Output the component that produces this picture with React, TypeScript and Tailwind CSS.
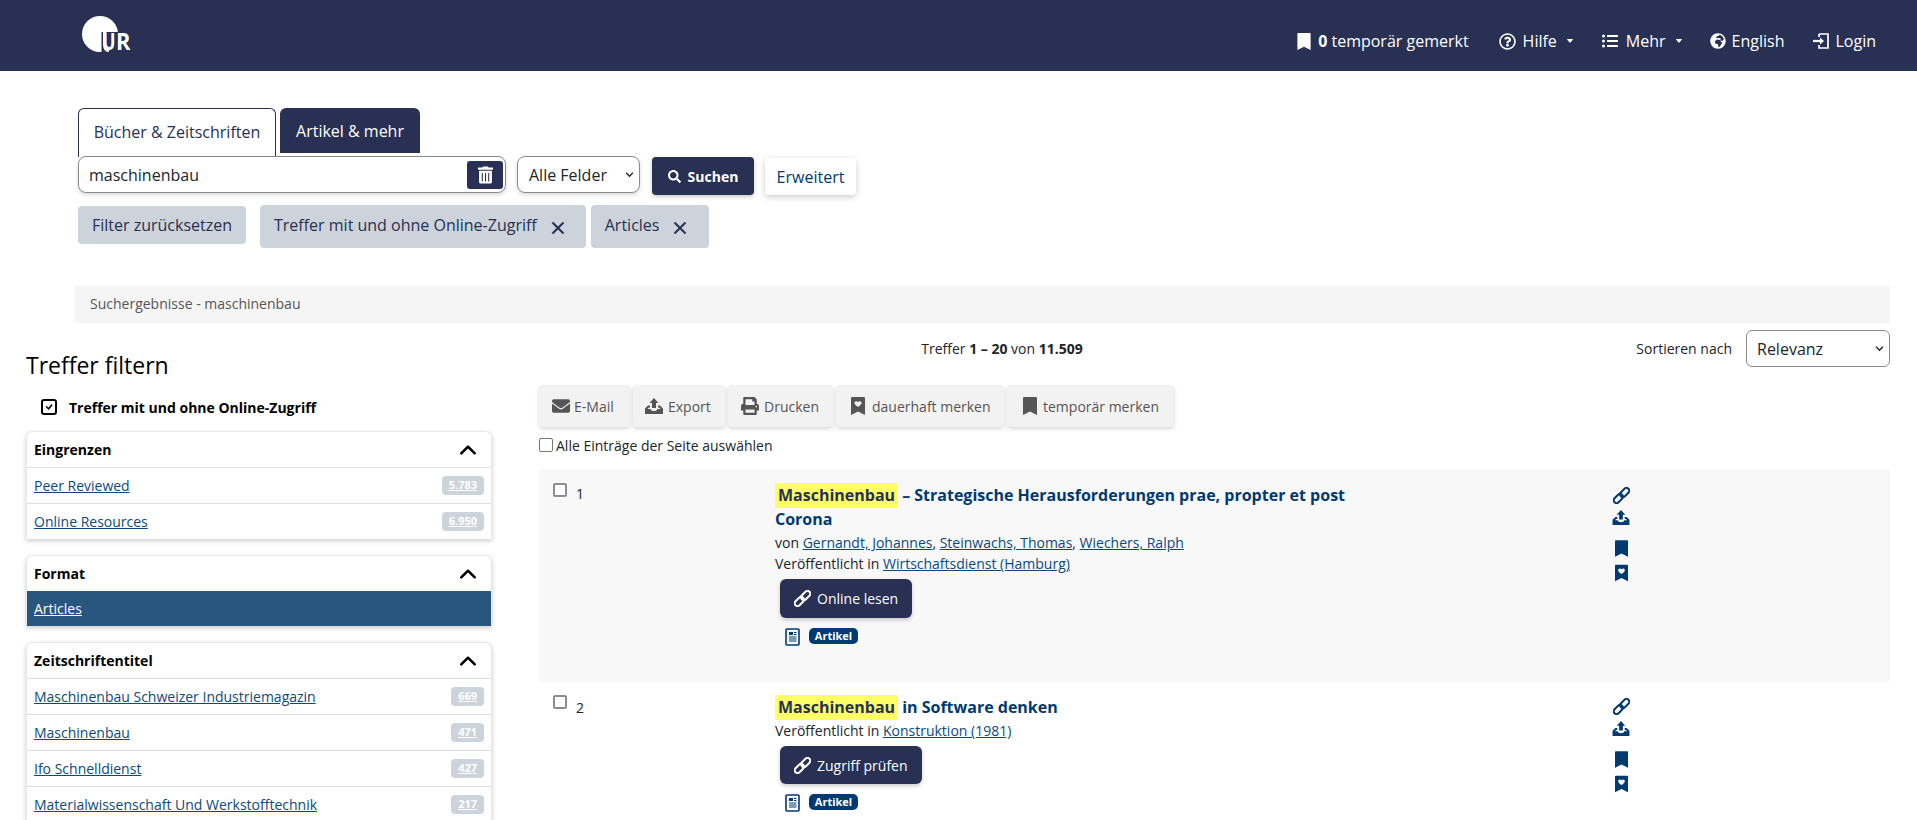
import React from "react";
import { BsChevronUp, BsCaretDownFill, BsCheck, BsX } from "react-icons/bs";
import {
  FaRegQuestionCircle,
  FaListUl,
  FaGlobeAfrica,
  FaEnvelope,
  FaPrint,
  FaTrashAlt,
  FaSearch,
} from "react-icons/fa";

const navy = "bg-[#283053]";

function Logo() {
  return (
    <svg width="50" height="36" viewBox="0 0 50 36" className="block">
      <circle cx="18" cy="18" r="18" fill="#fff" />
      <rect x="19.500" y="16" width="30.500" height="20" fill="#283053" />
      <path d="M21 16h3.500v11.500c0 2 1 3.200 2.500 3.200V36c-4 0-6-3-6-8z" fill="#fff" />
      <g transform="translate(20 34) scale(0.78 1)">
        <text fontSize="23" fontWeight="700" fill="#fff" fontFamily="'Open Sans',sans-serif">U</text>
      </g>
      <g transform="translate(34 34) scale(0.95 1)">
        <text fontSize="23" fontWeight="700" fill="#fff" fontFamily="'Open Sans',sans-serif">R</text>
      </g>
    </svg>
  );
}

function UploadIcon({ className }: { className?: string }) {
  return (
    <svg viewBox="0 0 18 16" className={className} fill="currentColor">
      <path d="M9 0l4.500 5H11v5H7V5H4.500z" />
      <path d="M0 10.500L3 7.500h2v2H3.800L2.500 11H5.500c.5 1.500 1.700 2 3.500 2s3-.5 3.500-2h3L14.200 9.500H13v-2h2l3 3V16H0z" />
    </svg>
  );
}

function LinkIcon({ className }: { className?: string }) {
  return (
    <svg viewBox="0 0 17 17" className={className} fill="none" stroke="currentColor" strokeWidth="2">
      <rect x="0" y="8.700" width="10.600" height="5.600" rx="2.800" transform="rotate(-45 5.300 11.500)" />
      <rect x="6.400" y="2.700" width="10.600" height="5.600" rx="2.800" transform="rotate(-45 11.700 5.500)" />
    </svg>
  );
}

function Bookmark({ className }: { className?: string }) {
  return (
    <svg viewBox="0 0 14 18" className={className} fill="currentColor">
      <path d="M1 0h12a1 1 0 011 1v17l-7-3.500L0 18V1a1 1 0 011-1z" />
    </svg>
  );
}

function BookmarkHeart({ className }: { className?: string }) {
  return (
    <svg viewBox="0 0 14 18" className={className} fill="currentColor">
      <path
        fillRule="evenodd"
        d="M1 0h12a1 1 0 011 1v17l-7-3.500L0 18V1a1 1 0 011-1zM7 5c1.700-1.900 4.400-.4 3.400 1.800-.5 1.100-2.300 2.500-3.400 3.300-1.100-.8-2.900-2.200-3.400-3.300C2.600 4.600 5.300 3.100 7 5z"
      />
    </svg>
  );
}

function LoginIcon({ className }: { className?: string }) {
  return (
    <svg viewBox="0 0 16 16" className={className} fill="none" stroke="currentColor" strokeWidth="1.700">
      <path d="M6 1h9v14H6v-3" />
      <path d="M6 4V1" />
      <path d="M0 8h9" strokeWidth="2.200" />
      <path d="M7 4.500L11 8l-4 3.500z" fill="currentColor" stroke="none" />
    </svg>
  );
}

function DocIcon() {
  return (
    <svg viewBox="0 0 15 18" className="w-[15px] h-[18px] text-[#003a70] shrink-0" fill="none" stroke="currentColor">
      <rect x="1" y="1" width="13" height="16" rx="1" strokeWidth="1.600" />
      <rect x="4" y="4" width="4" height="3" fill="currentColor" stroke="none" />
      <path d="M9 4.500h2.500M9 6.500h2.500M4 9h7.500M4 11h7.500M4 13h7.500" strokeWidth="1" />
    </svg>
  );
}

function Caret({ className }: { className: string }) {
  return <BsCaretDownFill className={`w-[8px] h-[8px] ${className}`} />;
}

function Header() {
  return (
    <header className={`h-[71px] ${navy} flex items-start justify-between pl-[82px] pr-[41px]`}>
      <div className="pt-[16px]">
        <Logo />
      </div>
      <nav className="flex items-center h-[24px] mt-[29px] text-white text-[16px]">
        <Bookmark className="w-[14px] h-[17px]" />
        <span className="ml-[7px]">
          <b>0</b> temporär gemerkt
        </span>
        <FaRegQuestionCircle className="ml-[30px] w-[17px] h-[17px]" />
        <span className="ml-[7px]">Hilfe</span>
        <Caret className="ml-[9px]" />
        <FaListUl className="ml-[28px] w-[16px] h-[16px]" />
        <span className="ml-[8px]">Mehr</span>
        <Caret className="ml-[9px]" />
        <FaGlobeAfrica className="ml-[27px] w-[16px] h-[16px]" />
        <span className="ml-[6px]">English</span>
        <LoginIcon className="ml-[29px] w-[16px] h-[16px]" />
        <span className="ml-[6px]">Login</span>
      </nav>
    </header>
  );
}

function Chip({ children, pad }: { children: React.ReactNode; pad: string }) {
  return (
    <div className={`h-[43px] bg-[#ccd3db] rounded-[4px] flex items-start pl-[14px] ${pad} pt-[8px] text-[16px] text-[#283053] gap-[8px]`}>
      <span>{children}</span>
      <BsX className="w-[26px] h-[26px] mt-[2px] stroke-[0.4]" />
    </div>
  );
}

function SearchArea() {
  return (
    <section className="pl-[78px] pt-[37px]">
      <div className="flex gap-[4px] h-[48px]">
        <div className="w-[198px] h-[49px] pb-[3px] relative z-10 border border-[#283053] border-b-0 rounded-t-[6px] bg-white flex items-center justify-center text-[16px] text-[#283053]">
          Bücher &amp; Zeitschriften
        </div>
        <div className={`w-[140px] h-[48px] ${navy} rounded-t-[6px] border-b-[3px] border-white flex items-center justify-center text-[16px] text-white`}>
          Artikel &amp; mehr
        </div>
      </div>
      <div className="flex items-start">
        <div className="w-[428px] h-[37px] relative z-20 bg-white border border-[#8a8a8a] rounded-[8px] shadow-[0_2px_4px_rgba(0,0,0,0.15)] flex items-center justify-between pl-[10px] pr-[2px] text-[16px] text-[#212529]">
          <span>maschinenbau</span>
          <span className={`w-[36px] h-[28px] ${navy} rounded-[3px] flex items-center justify-center text-white`}>
            <FaTrashAlt className="w-[15px] h-[18px]" />
          </span>
        </div>
        <div className="ml-[11px] w-[123px] h-[37px] bg-white border border-[#8a8a8a] rounded-[8px] shadow-[0_2px_4px_rgba(0,0,0,0.15)] flex items-center justify-between pl-[11px] pr-[5px] text-[16px] text-[#212529]">
          <span>Alle Felder</span>
          <svg width="9" height="9" viewBox="0 0 16 16" fill="none" stroke="#212529" strokeWidth="2.500">
            <path d="M2 5l6 6 6-6" />
          </svg>
        </div>
        <div className={`ml-[12px] mt-[1px] w-[102px] h-[38px] ${navy} rounded-[4px] shadow-[0_2px_4px_rgba(0,0,0,0.2)] flex items-center justify-center gap-[7px] text-white text-[14px] font-bold`}>
          <FaSearch className="w-[13px] h-[13px]" />
          Suchen
        </div>
        <div className="ml-[11px] mt-[2px] w-[91px] h-[37px] bg-white rounded-[4px] shadow-[0_2px_6px_rgba(0,0,0,0.2)] flex items-center justify-center text-[16px] text-[#003a70]">
          Erweitert
        </div>
      </div>
      <div className="flex items-start mt-[10px]">
        <div className="mt-[1px] w-[168px] h-[38px] bg-[#ccd3db] rounded-[4px] flex items-center justify-center text-[16px] text-[#283053]">
          Filter zurücksetzen
        </div>
        <div className="ml-[14px]">
          <Chip pad="pr-[15px]">Treffer mit und ohne Online-Zugriff</Chip>
        </div>
        <div className="ml-[5px]">
          <Chip pad="pr-[16px]">Articles</Chip>
        </div>
      </div>
    </section>
  );
}

function FacetRow({ label, count }: { label: string; count: string }) {
  return (
    <div className="h-[36px] border-t border-[#dfdfdf] flex items-center justify-between pl-[7px] pr-[7px] text-[14px]">
      <span className="underline text-[#0b4a7d]">{label}</span>
      <span className="h-[19px] px-[7px] rounded-[4px] bg-[#ccd3db] text-white text-[11px] font-bold underline flex items-center">
        {count}
      </span>
    </div>
  );
}

function FacetCard({ title, children }: { title: string; children: React.ReactNode }) {
  return (
    <div className="bg-white rounded-t-[6px] border border-b-0 border-[#e8e8e8] shadow-[0_2px_5px_rgba(0,0,0,0.2)] w-[466px] mb-[16px]">
      <div className="h-[35px] flex items-center justify-between pl-[7px] pr-[14px] text-[14px] font-bold text-black">
        {title}
        <BsChevronUp className="w-[18px] h-[18px] stroke-[1.2]" />
      </div>
      {children}
    </div>
  );
}

function Sidebar() {
  return (
    <aside className="w-[512px] pl-[26px] shrink-0">
      <h2 className="text-[23px] leading-[32px] text-black pt-[26px] box-content">Treffer filtern</h2>
      <div className="flex items-center mt-[17px] ml-[15px] h-[18px] text-[14px] font-bold text-black">
        <span className="w-[16px] h-[16px] border-2 border-black rounded-[3px] flex items-center justify-center mr-[12px]">
          <BsCheck className="w-[14px] h-[14px] stroke-[0.8]" />
        </span>
        Treffer mit und ohne Online-Zugriff
      </div>
      <div className="mt-[15px]">
        <FacetCard title="Eingrenzen">
          <FacetRow label="Peer Reviewed" count="5.783" />
          <FacetRow label="Online Resources" count="6.950" />
        </FacetCard>
        <FacetCard title="Format">
          <div className="h-[35px] bg-[#28567f] flex items-center pl-[7px] text-[14px] text-white underline">Articles</div>
        </FacetCard>
        <FacetCard title="Zeitschriftentitel">
          <FacetRow label="Maschinenbau Schweizer Industriemagazin" count="669" />
          <FacetRow label="Maschinenbau" count="471" />
          <FacetRow label="Ifo Schnelldienst" count="427" />
          <FacetRow label="Materialwissenschaft Und Werkstofftechnik" count="217" />
        </FacetCard>
      </div>
    </aside>
  );
}

function ToolButton({ icon, label, w }: { icon: React.ReactNode; label: string; w: string }) {
  return (
    <div className={`${w} h-[42px] rounded-[4px] bg-[#f2f2f2] shadow-[0_2px_4px_rgba(0,0,0,0.15)] flex items-center text-[14px] text-[#555]`}>
      {icon}
      {label}
    </div>
  );
}

function SideIcons({ className }: { className: string }) {
  return (
    <div className={`absolute left-[1073px] ${className} flex flex-col items-center text-[#003a70] w-[18px]`}>
      <LinkIcon className="w-[17px] h-[17px]" />
      <UploadIcon className="w-[18px] h-[15px] mt-[6px]" />
      <Bookmark className="w-[13px] h-[17px] mt-[15px]" />
      <BookmarkHeart className="w-[13px] h-[18px] mt-[7px]" />
    </div>
  );
}

function Tag() {
  return (
    <div className="flex items-start gap-[9px] ml-[10px]">
      <DocIcon />
      <span className="h-[16px] w-[49px] rounded-[5px] bg-[#003a70] text-white text-[11px] font-bold flex items-center justify-center">
        Artikel
      </span>
    </div>
  );
}

function Mark() {
  return <span className="bg-[#ffff66] text-[#283053] inline-block h-[25px] leading-[25px] px-[3px] mr-[4px]">Maschinenbau</span>;
}

function OpenButton({ w, h, label }: { w: string; h: string; label: string }) {
  return (
    <div className={`ml-[5px] mt-[5px] ${w} ${h} ${navy} rounded-[6px] shadow-[0_2px_4px_rgba(0,0,0,0.2)] flex items-center pl-[14px] gap-[6px] text-[14px] text-white`}>
      <LinkIcon className="w-[17px] h-[17px]" />
      {label}
    </div>
  );
}

const link = "underline text-[#0b4a7d]";

function Results() {
  return (
    <main className="flex-1 min-w-0 relative">
      <div className="h-[62px] flex items-start pl-[165px] pt-[7px]">
        <div className="w-[650px] h-[37px] leading-[37px] text-center text-[14px] text-[#212529]">
          Treffer <b>1 – 20</b> von <b>11.509</b>
        </div>
        <div className="ml-auto flex items-center mr-[27px] gap-[14px] text-[14px] text-[#212529]">
          Sortieren nach
          <div className="w-[144px] h-[37px] border border-[#8a8a8a] rounded-[6px] flex items-center justify-between pl-[10px] pr-[5px] text-[16px]">
            Relevanz
            <svg width="9" height="9" viewBox="0 0 16 16" fill="none" stroke="#212529" strokeWidth="2.500">
              <path d="M2 5l6 6 6-6" />
            </svg>
          </div>
        </div>
      </div>
      <div className="pl-[27px] pr-[27px]">
        <div className="flex gap-[3px]">
          <ToolButton w="w-[91px] pl-[13px] gap-[4px]" label="E-Mail" icon={<FaEnvelope className="w-[18px] h-[18px]" />} />
          <ToolButton w="w-[92px] pl-[12px] gap-[5px]" label="Export" icon={<UploadIcon className="w-[18px] h-[16px]" />} />
          <ToolButton w="w-[105px] pl-[13px] gap-[5px]" label="Drucken" icon={<FaPrint className="w-[18px] h-[18px]" />} />
          <ToolButton w="w-[168px] pl-[15px] gap-[7px]" label="dauerhaft merken" icon={<BookmarkHeart className="w-[14px] h-[18px]" />} />
          <ToolButton w="w-[167px] pl-[16px] gap-[6px]" label="temporär merken" icon={<Bookmark className="w-[14px] h-[18px]" />} />
        </div>
        <div className="flex items-center mt-[8px] h-[20px] text-[14px] text-[#212529]">
          <span className="w-[14px] h-[14px] border border-[#767676] rounded-[2px] bg-white mr-[3px]" />
          Alle Einträge der Seite auswählen
        </div>
        <div className="mt-[14px]">
          <article className="relative h-[213px] bg-[#f8f8f8] flex pt-[14px]">
            <div className="w-[236px] flex pl-[14px] items-start text-[14px] text-[#212529]">
              <span className="w-[14px] h-[14px] border-2 border-[#8c8c96] rounded-[2px] bg-white mr-[9px]" />
              <span className="leading-[20px] mt-[1px]">1</span>
            </div>
            <div className="flex-1">
              <div className="max-w-[600px] text-[16px] leading-[25px] font-bold text-[#003a70]">
                <div>
                  <Mark />– Strategische Herausforderungen prae, propter et post
                </div>
                <div className="leading-[22px]">Corona</div>
              </div>
              <div className="text-[14px] leading-[21px] mt-[2px] text-[#212529]">
                von <span className={link}>Gernandt, Johannes</span>, <span className={link}>Steinwachs, Thomas</span>,{" "}
                <span className={link}>Wiechers, Ralph</span>
              </div>
              <div className="text-[14px] leading-[21px] text-[#212529]">
                Veröffentlicht in <span className={link}>Wirtschaftsdienst (Hamburg)</span>
              </div>
              <OpenButton w="w-[132px]" h="h-[39px]" label="Online lesen" />
              <div className="mt-[10px]">
                <Tag />
              </div>
            </div>
            <SideIcons className="top-[18px]" />
          </article>
          <article className="relative h-[200px] flex pt-[13px]">
            <div className="w-[236px] flex pl-[14px] items-start text-[14px] text-[#212529]">
              <span className="w-[14px] h-[14px] border-2 border-[#8c8c96] rounded-[2px] bg-white mr-[9px]" />
              <span className="leading-[20px] mt-[3px]">2</span>
            </div>
            <div className="flex-1">
              <div className="text-[16px] leading-[25px] font-bold text-[#003a70]">
                <Mark />in Software denken
              </div>
              <div className="text-[14px] leading-[21px] text-[#212529]">
                Veröffentlicht in <span className={link}>Konstruktion (1981)</span>
              </div>
              <OpenButton w="w-[142px]" h="h-[38px]" label="Zugriff prüfen" />
              <div className="mt-[10px]">
                <Tag />
              </div>
            </div>
            <SideIcons className="top-[16px]" />
          </article>
        </div>
      </div>
    </main>
  );
}

export default function App() {
  return (
    <div className="w-[1917px] h-[820px] overflow-hidden bg-white font-['Open_Sans',sans-serif]">
      <Header />
      <SearchArea />
      <div className="ml-[75px] mr-[27px] mt-[38px] h-[37px] bg-[#f5f5f5] flex items-center pl-[15px] pb-[2px] text-[14px] text-[#555]">
        Suchergebnisse - maschinenbau
      </div>
      <div className="flex">
        <Sidebar />
        <Results />
      </div>
    </div>
  );
}
